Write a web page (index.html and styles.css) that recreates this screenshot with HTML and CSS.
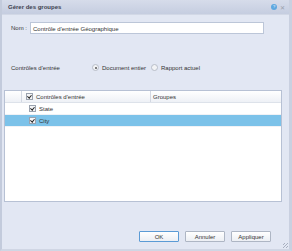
FILE: index.html
```html
<!DOCTYPE html>
<html>
<head>
<meta charset="utf-8" />
<title>Gérer des groupes</title>
<link rel="stylesheet" href="styles.css">
</head>
<body>
  <section class="dialog">
    <header class="titlebar">
      <h1>Gérer des groupes</h1>
      <div class="tools">
        <span class="help">?</span>
        <span class="close">&#x2715;</span>
      </div>
    </header>
    <div class="content">
      <div class="form-item name-row">
        <label>Nom :</label>
        <div class="text-input">Contrôle d'entrée Géographique</div>
      </div>
      <div class="form-item scope-row">
        <span class="scope-label">Contrôles d'entrée</span>
        <label class="radio"><span class="dot checked"></span>Document entier</label>
        <label class="radio"><span class="dot"></span>Rapport actuel</label>
      </div>
      <div class="grid">
        <div class="grid-head">
          <div class="cell c-first"></div>
          <div class="cell c-name"><span class="check"></span>Contrôles d'entrée</div>
          <div class="cell c-group">Groupes</div>
        </div>
        <div class="grid-row">
          <div class="cell c-first"></div>
          <div class="cell c-name"><span class="check"></span>State</div>
          <div class="cell c-group"></div>
        </div>
        <div class="grid-row selected">
          <div class="cell c-first"></div>
          <div class="cell c-name"><span class="check"></span>City</div>
          <div class="cell c-group"></div>
        </div>
      </div>
      <footer class="buttons">
        <button class="btn default">OK</button>
        <button class="btn">Annuler</button>
        <button class="btn">Appliquer</button>
      </footer>
    </div>
    <span class="grip"></span>
  </section>
</body>
</html>
```

FILE: styles.css
```css
html, body {
  width: 100%;
  height: 100%;
}
body {
  margin: 0;
  overflow: hidden;
  background: #e2e7f3;
  font-family: "Liberation Sans", Arial, sans-serif;
  font-size: 6px;
  color: #333;
}
.dialog {
  position: relative;
  display: flex;
  flex-direction: column;
  height: 251px;
  box-sizing: border-box;
  border-left: 2px solid #c3cbdc;
  border-right: 3px solid #c9d0e0;
  border-bottom: 2px solid #d0d6e4;
  background: #e2e7f3;
}
.titlebar {
  display: flex;
  align-items: center;
  justify-content: space-between;
  height: 14px;
  padding: 0 4px 0 6px;
  background: linear-gradient(#d6dcea, #c5cde0);
  border-bottom: 1px solid #d2d8e6;
}
.titlebar h1 {
  margin: 0;
  font-size: 6px;
  font-weight: bold;
  color: #3c4250;
}
.tools {
  display: flex;
  align-items: center;
  gap: 3px;
}
.help {
  width: 6px;
  height: 6px;
  border-radius: 50%;
  background: #5ea8e0;
  color: #fff;
  font-size: 4px;
  line-height: 6px;
  text-align: center;
}
.close {
  font-size: 6px;
  color: #9aa0ac;
}
.content {
  display: flex;
  flex-direction: column;
  flex: 1;
  padding: 7px 7px 0 2px;
}
.form-item {
  display: flex;
  align-items: center;
}
.name-row {
  padding-left: 7px;
}
.name-row label {
  width: 19px;
}
.text-input {
  width: 234px;
  height: 12px;
  line-height: 12px;
  padding: 0 2px;
  box-sizing: border-box;
  background: #fff;
  border: 1px solid #bcc6d8;
}
.scope-row {
  margin-top: 30px;
  padding-left: 7px;
}
.scope-label {
  width: 81px;
}
.radio {
  display: flex;
  align-items: center;
  gap: 3px;
  width: 59px;
}
.dot {
  width: 5px;
  height: 5px;
  border-radius: 50%;
  border: 1px solid #b8bec8;
  background: #f2f3f5;
  box-sizing: content-box;
  position: relative;
}
.dot.checked::after {
  content: "";
  position: absolute;
  left: 1.5px;
  top: 1.5px;
  width: 2px;
  height: 2px;
  border-radius: 50%;
  background: #555;
}
.grid {
  margin-top: 19px;
  height: 112px;
  background: #fff;
  border: 1px solid #b7c1d4;
  width: 278px;
  box-sizing: border-box;
}
.grid-head, .grid-row {
  display: flex;
  height: 11px;
  align-items: stretch;
}
.grid-head {
  background: linear-gradient(#ffffff, #eef1f6);
  border-bottom: 1px solid #dde2ea;
}
.grid-head .cell {
  border-right: 1px solid #d3d8e2;
}
.grid-row {
  border-bottom: 1px solid #f0f2f6;
}
.grid-row.selected {
  background: #7cc2e9;
}
.cell {
  display: flex;
  align-items: center;
  box-sizing: border-box;
}
.c-first {
  width: 17px;
}
.c-name {
  width: 129px;
  padding-left: 4px;
  gap: 3px;
}
.grid-row .c-name {
  padding-left: 7px;
}
.c-group {
  flex: 1;
  padding-left: 2px;
}
.grid-head .c-group {
  border-right: none;
}
.check {
  width: 5px;
  height: 5px;
  border: 1px solid #9aa2ae;
  background: #f4f5f7;
  position: relative;
}
.check::after {
  content: "";
  position: absolute;
  left: 1px;
  top: 0;
  width: 1.5px;
  height: 3px;
  border: solid #222;
  border-width: 0 1px 1px 0;
  transform: rotate(40deg);
}
.buttons {
  display: flex;
  justify-content: flex-end;
  gap: 6px;
  margin-top: 29px;
  padding-right: 11px;
}
.btn {
  width: 40px;
  height: 11px;
  padding: 0;
  font-family: inherit;
  font-size: 6px;
  color: #333;
  background: linear-gradient(#ffffff, #eceff4);
  border: 1px solid #aeb6c4;
  border-radius: 1px;
}
.btn.default {
  border-color: #5b9bd5;
}
.grip {
  position: absolute;
  right: 1px;
  bottom: 1px;
  width: 5px;
  height: 5px;
  background: repeating-linear-gradient(135deg, transparent 0 1px, #a8b0c0 1px 2px);
}
```
